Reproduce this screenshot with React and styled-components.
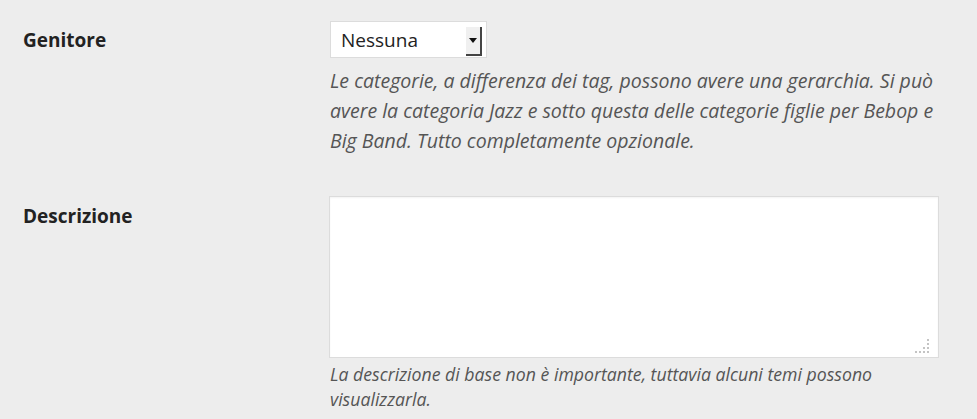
import React from 'react';
import styled, { createGlobalStyle } from 'styled-components';

const GlobalStyle = createGlobalStyle`
    html, body {
        margin: 0;
        padding: 0;
        background: #ededed;
        font-family: "Open Sans", "Liberation Sans", sans-serif;
        color: #23282d;
    }
`;

const Form = styled.div`
    width: 977px;
    height: 419px;
    overflow: hidden;
    padding: 21px 0 0 23px;
    box-sizing: border-box;
`;

const Row = styled.div`
    display: grid;
    grid-template-columns: 306px 625px;
    margin-bottom: ${props => props.gap || 0}px;
`;

const Label = styled.div`
    font-size: 19px;
    font-weight: bold;
    line-height: 22px;
    padding-top: ${props => props.top || 0}px;
    color: #222;
`;

const Field = styled.div`
    display: flex;
    flex-direction: column;
`;

const Select = styled.div`
    margin-left: 1px;
    width: 157px;
    height: 37px;
    box-sizing: border-box;
    border: 1px solid #dcdcdc;
    background: #fff;
    display: flex;
    align-items: center;
    justify-content: space-between;
    padding: 0 4px 0 10px;
    font-size: 19px;
    color: #222;
`;

const ArrowButton = styled.div`
    width: 16px;
    height: 29px;
    margin-top: 3px;
    box-sizing: border-box;
    background: #f0f0f0;
    border-right: 2px solid #444;
    border-bottom: 2px solid #444;
    display: flex;
    align-items: center;
    justify-content: center;
`;

const Help = styled.p`
    margin: ${props => props.top || 0}px 0 0 1px;
    font-style: italic;
    font-size: ${props => props.size || 19.5}px;
    line-height: ${props => props.lh || 30}px;
    color: #555;
`;

const TextArea = styled.div`
    position: relative;
    width: 610px;
    height: 162px;
    box-sizing: border-box;
    border: 1px solid #dcdcdc;
    background: #fff;
    box-shadow: inset 0 1px 2px rgba(0, 0, 0, 0.05);
`;

const Grip = styled.svg`
    position: absolute;
    right: 9px;
    bottom: 4px;
`;

const gripDots = [
    [13, 1], [13, 5], [9, 9], [13, 9], [5, 13], [9, 13], [13, 13], [1, 13],
];

const App = () => (
    <>
        <GlobalStyle />
        <Form>
            <Row gap={40}>
                <Label top={8}>Genitore</Label>
                <Field>
                    <Select>
                        <span>Nessuna</span>
                        <ArrowButton>
                            <svg width="8" height="5" viewBox="0 0 8 5">
                                <path d="M0 0h8L4 5z" fill="#111" />
                            </svg>
                        </ArrowButton>
                    </Select>
                    <Help top={8}>
                        Le categorie, a differenza dei tag, possono avere una gerarchia. Si può avere la categoria Jazz e sotto questa delle categorie figlie per Bebop e Big Band. Tutto completamente opzionale.
                    </Help>
                </Field>
            </Row>
            <Row>
                <Label top={9}>Descrizione</Label>
                <Field>
                    <TextArea>
                        <Grip width="15" height="15" viewBox="0 0 15 15">
                            <g fill="#c4c4c4">
                                {gripDots.map(([x, y]) => (
                                    <rect key={`${x}-${y}`} x={x} y={y} width="2" height="2" />
                                ))}
                            </g>
                        </Grip>
                    </TextArea>
                    <Help top={4} size={17.7} lh={25}>
                        La descrizione di base non è importante, tuttavia alcuni temi possono visualizzarla.
                    </Help>
                </Field>
            </Row>
        </Form>
    </>
);

export default App;
